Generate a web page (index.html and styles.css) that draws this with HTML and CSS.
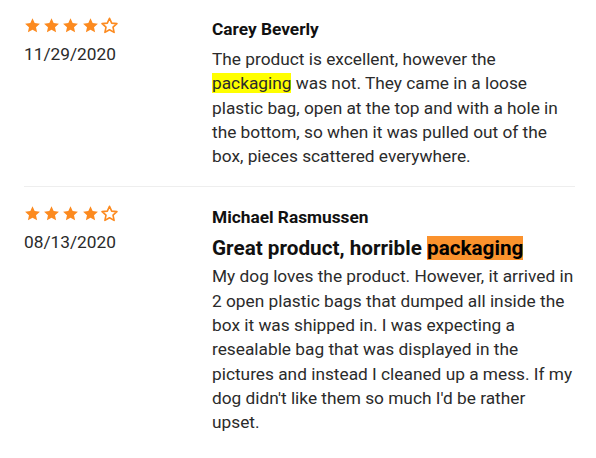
FILE: index.html
```html
<!DOCTYPE html>
<html lang="en">
<head>
    <meta charset="UTF-8">
    <meta name="viewport" content="width=device-width, initial-scale=1.0">
    <title>Reviews</title>
    <link rel="stylesheet" href="styles.css">
</head>
<body>
    <svg width="0" height="0" class="defs">
        <defs>
            <polygon id="star" points="12,1.8 15.06,8.59 22.46,9.4 16.95,14.41 18.47,21.7 12,18 5.53,21.7 7.05,14.41 1.54,9.4 8.94,8.59"/>
        </defs>
    </svg>

    <div class="reviews">

        <div class="review first">
            <div class="meta">
                <div class="stars">
                    <svg class="star" viewBox="0 0 24 24"><use href="#star"/></svg>
                    <svg class="star" viewBox="0 0 24 24"><use href="#star"/></svg>
                    <svg class="star" viewBox="0 0 24 24"><use href="#star"/></svg>
                    <svg class="star" viewBox="0 0 24 24"><use href="#star"/></svg>
                    <svg class="star empty" viewBox="0 0 24 24"><use href="#star"/></svg>
                </div>
                <div class="date">11/29/2020</div>
            </div>
            <div class="content">
                <div class="author">Carey Beverly</div>
                <p class="text">The product is excellent, however the <mark class="hl-yellow">packaging</mark> was not. They came in a loose plastic bag, open at the top and with a hole in the bottom, so when it was pulled out of the box, pieces scattered everywhere.</p>
            </div>
        </div>

        <div class="review">
            <div class="meta">
                <div class="stars">
                    <svg class="star" viewBox="0 0 24 24"><use href="#star"/></svg>
                    <svg class="star" viewBox="0 0 24 24"><use href="#star"/></svg>
                    <svg class="star" viewBox="0 0 24 24"><use href="#star"/></svg>
                    <svg class="star" viewBox="0 0 24 24"><use href="#star"/></svg>
                    <svg class="star empty" viewBox="0 0 24 24"><use href="#star"/></svg>
                </div>
                <div class="date">08/13/2020</div>
            </div>
            <div class="content">
                <div class="author">Michael Rasmussen</div>
                <div class="title">Great product, horrible <mark class="hl-orange">packaging</mark></div>
                <p class="text">My dog loves the product. However, it arrived in 2 open plastic bags that dumped all inside the box it was shipped in. I was expecting a resealable bag that was displayed in the pictures and instead I cleaned up a mess. If my dog didn't like them so much I'd be rather upset.</p>
            </div>
        </div>

    </div>
</body>
</html>
```

FILE: styles.css
```css
body, html {
    margin: 0;
    padding: 0;
    background-color: #ffffff;
    font-family: 'Roboto', 'Liberation Sans', sans-serif;
    color: #222;
}
.defs {
    position: absolute;
}
.reviews {
    padding: 0 21px 0 24px;
}
.review {
    display: grid;
    grid-template-columns: 188px 1fr;
    padding: 18.5px 0 18px;
}
.review.first {
    padding: 17px 0 17.5px;
    border-bottom: 1px solid #eeeeee;
}
.stars {
    display: flex;
    gap: 2.4px;
    margin-left: -0.5px;
    height: 17px;
}
.star {
    width: 17px;
    height: 17px;
    fill: #fc8a1f;
}
.star.empty {
    fill: #ffffff;
    stroke: #fc8a1f;
    stroke-width: 2.3;
    stroke-linejoin: round;
}
.date {
    margin-top: 8px;
    font-size: 17.3px;
    line-height: 24.3px;
    color: #2a2a2a;
}
.author {
    font-size: 17.3px;
    line-height: 24.3px;
    font-weight: 700;
    color: #111;
    margin-bottom: 5.7px;
}
.title {
    font-size: 20.7px;
    line-height: 26px;
    font-weight: 700;
    color: #111;
    margin: 0 0 3px;
}
.text {
    margin: 0;
    font-size: 17.3px;
    line-height: 24.3px;
    color: #2b2b2b;
}
mark {
    color: inherit;
    padding: 0;
}
.hl-yellow {
    background-color: #ffff00;
}
.hl-orange {
    background-color: #fb922d;
    color: #000;
}
```
